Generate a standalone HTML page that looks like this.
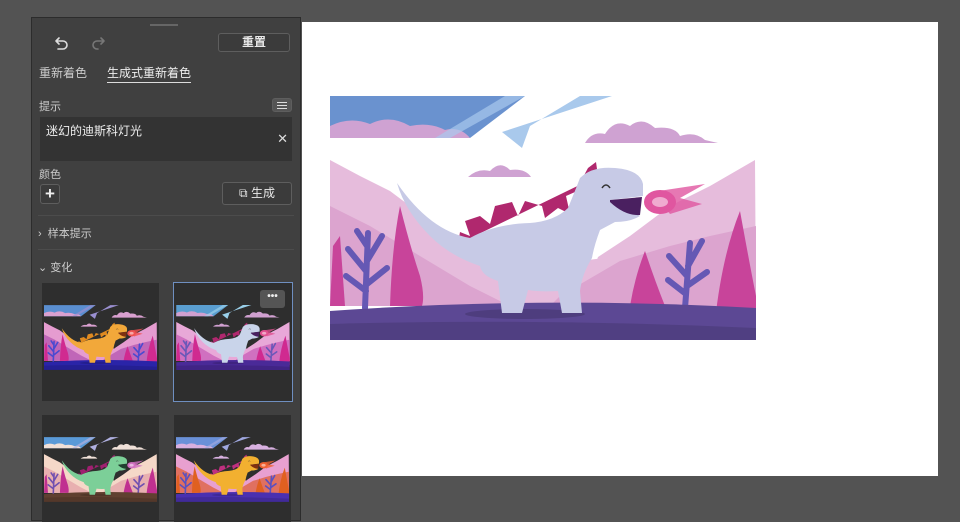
<!DOCTYPE html>
<html><head><meta charset="utf-8"><style>
*{margin:0;padding:0;box-sizing:border-box}
body{width:960px;height:521px;background:#535353;position:relative;overflow:hidden;font-family:"Liberation Sans","Noto Sans CJK SC",sans-serif;color:#ddd;font-size:11px}
.abs{position:absolute}
#canvas{left:302px;top:22px;width:636px;height:454px;background:#fff}
#panel{left:31px;top:17px;width:270px;height:504px;background:#404040;border:1px solid #2c2c2c}
.btn{border:1px solid #5e5e5e;border-radius:3px;background:#3b3b3b;color:#e8e8e8;text-align:center}
.sep{height:1px;background:#4c4c4c;left:6px;right:6px}
.th{background:#2e2e2e}
</style></head><body>
<svg width="0" height="0" style="position:absolute">
<defs>
<symbol id="scene" viewBox="0 0 426 244">
 <polygon points="0,0 195,0 140,42 0,42" fill="var(--sky)"/>
 <path d="M0 42 L0 30 Q20 20 40 28 Q60 18 80 30 Q100 26 115 34 Q130 30 140 42Z" fill="var(--cloud)"/>
 <polygon points="120,42 195,0 175,0 105,42" fill="var(--sky2)" opacity=".7"/>
 <polygon points="172,36 282,0 250,0 200,30 192,52" fill="var(--sky2)"/>
 <path d="M255 47 Q262 35 275 38 Q285 22 300 30 Q312 20 325 32 Q345 30 350 40 Q365 35 375 44 L388 47Z" fill="var(--cloud)"/>
 <path d="M138 81 Q148 72 160 75 Q170 64 180 74 Q195 72 201 81Z" fill="var(--cloud)"/>
 <polygon points="0,64 30,80 60,95 100,125 138,150 170,210 0,210" fill="var(--mt)"/>
 <polygon points="268,161 300,140 340,110 380,90 425,64 426,210 250,210" fill="var(--mt)"/>
 <polygon points="90,175 130,158 170,150 210,158 250,165 290,160 290,212 90,212" fill="var(--mt)"/>
 <polygon points="0,110 40,130 90,160 140,190 180,210 0,210" fill="var(--mt2)"/>
 <polygon points="230,200 290,165 340,150 380,140 426,130 426,210 220,210" fill="var(--mt2)"/>
 <path d="M60 210 Q62 150 70 110 Q80 150 90 180 Q95 200 92 210Z" fill="var(--tree)"/>
 <path d="M0 210 L3 150 L10 140 L15 210Z" fill="var(--tree)"/>
 <path d="M300 210 Q305 180 315 155 Q325 185 335 210Z" fill="var(--tree)"/>
 <path d="M385 225 Q392 160 410 115 Q420 170 426 200 L426 225Z" fill="var(--tree)"/>
 <path d="M35 212 l3 -75 M36 175 l-18 -22 M37 165 l15 -25 M36 195 l-20 -15 M37 188 l20 -16 M37 150 l-10 -15" stroke="var(--leaf)" stroke-width="6" stroke-linecap="round" fill="none"/>
 <path d="M355 212 l5 -65 M357 180 l-18 -20 M358 170 l14 -25 M356 198 l-18 -14 M357 190 l20 -14" stroke="var(--leaf)" stroke-width="6" stroke-linecap="round" fill="none"/>
 <path d="M0 215 Q213 200 426 212 L426 244 L0 244Z" fill="var(--gnd)"/>
 <path d="M0 228 Q213 222 426 232 L426 244 L0 244Z" fill="#000" opacity=".12"/>
 <ellipse cx="195" cy="218" rx="60" ry="5" fill="#000" opacity=".15"/>
 <polygon points="128,148 130,136 140,140 135,125 150,120 160,128 165,110 182,106 188,120 195,105 212,110 215,122 228,112 240,118 236,100 245,96 258,72 266,66 268,80" fill="var(--spk)"/>
 <path d="M67 87 Q100 135 140 142 Q165 128 200 127 Q225 125 238 112 Q245 95 250 82 Q262 70 285 72 Q310 74 313 88 L313 100 L280 104 L310 120 Q300 126 285 126 L270 134 Q264 150 262 162 Q252 178 250 195 L252 217 L232 217 L228 195 Q210 196 198 194 L192 217 L172 217 L168 185 Q152 180 150 170 Q120 160 100 140 Q75 115 67 87Z" fill="var(--body)"/>
 <path d="M280 104 L312 101 L310 119 Q295 120 280 106Z" fill="var(--mouth)"/>
 <path d="M272 92 q4 -6 8 0" stroke="#333" stroke-width="1.5" fill="none"/>
 <ellipse cx="330" cy="106" rx="16" ry="12" fill="var(--fire)"/>
 <polygon points="322,96 375,88 350,102 372,108 340,118" fill="var(--fire)" opacity=".8"/>
 <ellipse cx="330" cy="106" rx="8" ry="5" fill="#fff" opacity=".5"/>
</symbol>
</defs></svg>

<div id="canvas" class="abs"></div>
<svg class="abs" style="left:330px;top:96px" width="426" height="244"><use href="#scene" style="--sky:#6a92cf;--sky2:#a9c9ec;--cloud:#cfa2d2;--mt:#e6bcdc;--mt2:#dca4cf;--tree:#c8449a;--leaf:#6558b4;--gnd:#5c4894;--spk:#b0286e;--body:#c7cae6;--mouth:#4a2060;--fire:#e056a0"/></svg>

<div id="panel" class="abs">
 <div class="abs" style="left:118px;top:6px;width:28px;height:2px;background:#666"></div>
 <svg class="abs" style="left:20px;top:18px" width="60" height="16" fill="none" stroke-width="1.6" stroke-linecap="round"><path d="M4 5 h7 a4 4 0 0 1 0 8 h-5 M4 5 l3 -3 M4 5 l3 3" stroke="#ddd"/><path d="M52 5 h-7 a4 4 0 0 0 0 8 h1 M52 5 l-3 -3 M52 5 l-3 3" stroke="#777"/></svg>
 <div class="abs btn" style="left:186px;top:15px;width:72px;height:19px;line-height:17px;font-size:12px;font-weight:bold">重置</div>
 <div class="abs" style="left:7px;top:46px;font-size:12px;color:#ccc">重新着色</div>
 <div class="abs" style="left:75px;top:46px;font-size:12px;color:#eee;border-bottom:1px solid #ddd;padding-bottom:1px">生成式重新着色</div>
 <div class="abs" style="left:7px;top:80px;font-size:11px;color:#ccc">提示</div>
 <div class="abs btn" style="left:240px;top:80px;width:20px;height:14px;background:#555"><div style="margin:3px 4px;height:7px;border-top:1px solid #ddd;border-bottom:1px solid #ddd;position:relative"><div style="position:absolute;top:2px;left:0;right:0;height:1px;background:#ddd"></div></div></div>
 <div class="abs" style="left:8px;top:99px;width:252px;height:44px;background:#333"><div style="position:absolute;left:6px;top:5px;font-size:12px;color:#eee">迷幻的迪斯科灯光</div><div style="position:absolute;right:4px;top:14px;font-size:13px;color:#ddd">✕</div></div>
 <div class="abs" style="left:7px;top:148px;font-size:11px;color:#ccc">颜色</div>
 <div class="abs btn" style="left:8px;top:166px;width:20px;height:20px;line-height:17px;font-size:17px;font-weight:bold;color:#eee">+</div>
 <div class="abs btn" style="left:190px;top:164px;width:70px;height:23px;line-height:21px;font-size:12px">⧉ 生成</div>
 <div class="abs sep" style="top:197px"></div>
 <div class="abs" style="left:6px;top:207px;font-size:11px;color:#ccc">›&nbsp; 样本提示</div>
 <div class="abs sep" style="top:231px"></div>
 <div class="abs" style="left:6px;top:241px;font-size:11px;color:#ccc">⌄ 变化</div>

 <div class="abs th" style="left:10px;top:265px;width:117px;height:118px"><svg style="position:absolute;left:2px;top:22px" width="113" height="65"><use href="#scene" style="--sky:#5a8ed0;--sky2:#9a8fd0;--cloud:#d9a0d0;--mt:#e59cd0;--mt2:#c066b8;--tree:#d02a90;--leaf:#4a4ad0;--gnd:#2a24a8;--spk:#e08a20;--body:#f2a83a;--mouth:#803010;--fire:#f05050"/></svg></div>
 <div class="abs th" style="left:141px;top:264px;width:120px;height:120px;border:1px solid #6f8fc0"><svg style="position:absolute;left:2px;top:22px" width="114" height="65"><use href="#scene" style="--sky:#5a9ed0;--sky2:#9ad0ea;--cloud:#d0a0d0;--mt:#e8a8d8;--mt2:#d070c0;--tree:#d02a90;--leaf:#6a58b8;--gnd:#4a2a98;--spk:#b0286e;--body:#c9d4ea;--mouth:#4a2060;--fire:#e05090"/></svg><div style="position:absolute;right:7px;top:7px;width:25px;height:18px;background:#555;border-radius:3px;color:#eee;font-size:10px;text-align:center;line-height:14px;font-weight:bold">•••</div></div>
 <div class="abs th" style="left:10px;top:397px;width:117px;height:107px"><svg style="position:absolute;left:2px;top:22px" width="113" height="65"><use href="#scene" style="--sky:#5a9ad8;--sky2:#b0b0e0;--cloud:#f0e0d8;--mt:#f5d8c8;--mt2:#e8b0b0;--tree:#c03090;--leaf:#7050b0;--gnd:#604030;--spk:#a02070;--body:#7ccf98;--mouth:#204030;--fire:#d070c0"/></svg></div>
 <div class="abs th" style="left:142px;top:397px;width:117px;height:107px"><svg style="position:absolute;left:2px;top:22px" width="113" height="65"><use href="#scene" style="--sky:#6a90d8;--sky2:#a0a8e0;--cloud:#d8b0e0;--mt:#e8a0d0;--mt2:#e07060;--tree:#e06020;--leaf:#5a50c0;--gnd:#4a30b0;--spk:#c03080;--body:#f2b030;--mouth:#803010;--fire:#f06030"/></svg></div>
</div>
</body></html>
